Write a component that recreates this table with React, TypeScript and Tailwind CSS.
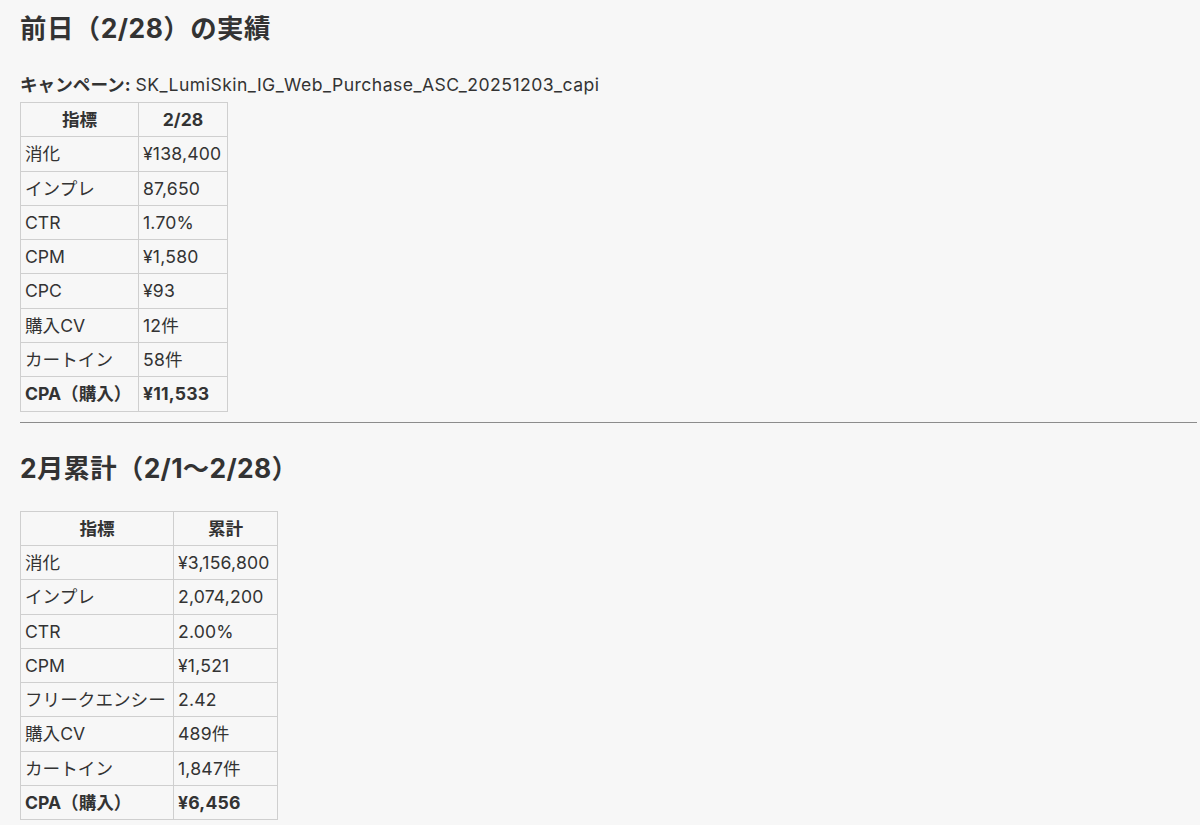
const daily: [string, string][] = [
  ['消化', '¥138,400'],
  ['インプレ', '87,650'],
  ['CTR', '1.70%'],
  ['CPM', '¥1,580'],
  ['CPC', '¥93'],
  ['購入CV', '12件'],
  ['カートイン', '58件'],
];

const monthly: [string, string][] = [
  ['消化', '¥3,156,800'],
  ['インプレ', '2,074,200'],
  ['CTR', '2.00%'],
  ['CPM', '¥1,521'],
  ['フリークエンシー', '2.42'],
  ['購入CV', '489件'],
  ['カートイン', '1,847件'],
];

function MetricTable({
  head,
  rows,
  total,
  widths,
}: {
  head: string;
  rows: [string, string][];
  total: string;
  widths: [string, string, string];
}) {
  const cell = 'border border-[#cfcfcf] px-[4px] py-[4px] leading-[25.3px] whitespace-nowrap';
  return (
    <table className={`table-fixed border-collapse ${widths[0]}`}>
      <thead>
        <tr>
          <th className={`${cell} ${widths[1]} text-center font-bold`}>指標</th>
          <th className={`${cell} ${widths[2]} text-center font-bold`}>{head}</th>
        </tr>
      </thead>
      <tbody>
        {rows.map(([k, v]) => (
          <tr key={k}>
            <td className={cell}>{k}</td>
            <td className={`${cell} tracking-[0.2px]`}>{v}</td>
          </tr>
        ))}
        <tr>
          <td className={`${cell} font-bold`}>CPA（購入）</td>
          <td className={`${cell} font-bold tracking-[0.2px]`}>{total}</td>
        </tr>
      </tbody>
    </table>
  );
}

export default function App() {
  return (
    <div className="min-h-screen bg-[#f7f7f7] text-[#333] pl-5 pr-[3px] pt-3 pb-10 text-[17.6px] font-['Inter','Noto_Sans_CJK_JP',sans-serif]">
      <h2 className="text-[26.4px] font-bold leading-[33px] tracking-[0.5px]">前日（2/28）の実績</h2>
      <p className="mt-[26.5px] leading-[25px]">
        <span className="font-bold">キャンペーン:</span>{' '}
        <span className="tracking-[0.45px]">SK_LumiSkin_IG_Web_Purchase_ASC_20251203_capi</span>
      </p>
      <div className="mt-[5.5px]">
        <MetricTable
          head="2/28"
          rows={daily}
          total="¥11,533"
          widths={['w-[207px]', 'w-[118px]', 'w-[89px]']}
        />
      </div>
      <hr className="mt-[10px] border-0 border-t border-[#8c8c8c]" />
      <h2 className="mt-[29px] text-[26.4px] font-bold leading-[33px] tracking-[0.3px]">2月累計（2/1〜2/28）</h2>
      <div className="mt-[26px]">
        <MetricTable
          head="累計"
          rows={monthly}
          total="¥6,456"
          widths={['w-[257px]', 'w-[153px]', 'w-[104px]']}
        />
      </div>
    </div>
  );
}
